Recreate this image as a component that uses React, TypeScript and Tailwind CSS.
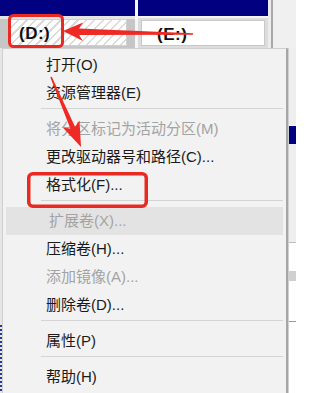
import type { ReactNode } from 'react'

type Entry =
  | { kind: 'item'; label: string; disabled?: boolean; active?: boolean }
  | { kind: 'sep' }

const entries: Entry[] = [
  { kind: 'item', label: '打开(O)' },
  { kind: 'item', label: '资源管理器(E)' },
  { kind: 'sep' },
  { kind: 'item', label: '将分区标记为活动分区(M)', disabled: true },
  { kind: 'item', label: '更改驱动器号和路径(C)...' },
  { kind: 'item', label: '格式化(F)...' },
  { kind: 'sep' },
  { kind: 'item', label: '扩展卷(X)...', disabled: true, active: true },
  { kind: 'item', label: '压缩卷(H)...' },
  { kind: 'item', label: '添加镜像(A)...', disabled: true },
  { kind: 'item', label: '删除卷(D)...' },
  { kind: 'sep' },
  { kind: 'item', label: '属性(P)' },
  { kind: 'sep' },
  { kind: 'item', label: '帮助(H)' },
]

function VolumeLabel({ children }: { children: ReactNode }) {
  return (
    <span className="text-[17px] font-bold leading-none tracking-[0.5px] text-[#111]">
      {children}
    </span>
  )
}

function MenuRow({ entry }: { entry: Entry }) {
  if (entry.kind === 'sep') {
    return (
      <div className="h-[8px] pl-[38px] pr-[3px] pt-[1px]">
        <div className="h-px bg-[#d4d4d4]" />
      </div>
    )
  }
  return (
    <div
      className={`flex h-[28px] items-center pl-[43px] text-[15px] ${
        entry.disabled ? 'text-[#a3a3a3]' : 'text-[#1a1a1a]'
      } ${entry.active ? 'mx-[3px] bg-[#e3e3e3] pl-[40px]' : ''}`}
    >
      {entry.label}
    </div>
  )
}

function Annotations() {
  return (
    <svg
      className="pointer-events-none absolute left-0 top-0"
      width={296}
      height={393}
      viewBox="0 0 296 393"
    >
      <rect x={9.5} y={15.5} width={53} height={31} rx={4} fill="none" stroke="#e82a22" strokeWidth={3} />
      <rect x={28.75} y={173.75} width={117.5} height={32.5} rx={4} fill="none" stroke="#e82a22" strokeWidth={3.5} />
      <polygon
        points="63,31 83,22.5 79,28.5 193,33.2 193,34.8 79,35 83,41"
        fill="#ef2a24"
      />
      <polygon
        points="81,147 79.5,120.5 75,126.7 51.8,76.7 50.3,77.3 70.4,128.7 62.8,127.5"
        fill="#ef2a24"
      />
    </svg>
  )
}

export default function App() {
  return (
    <div className="relative flex h-[393px] w-[296px] flex-col overflow-hidden bg-[#f0f0f0] font-['Liberation_Sans','Noto_Sans_CJK_SC',sans-serif]">
      {/* disk map strip */}
      <div className="flex h-[48px]">
        <div className="flex w-[135px] flex-col bg-[#c6c6c6]">
          <div className="h-[16px] bg-[#000080]" />
          <div className="h-[3px] bg-[#e4e4e4]" />
          <div className="flex flex-1 px-[8px] pb-[2px]">
            <div className="flex flex-1 items-center border border-[#d0d0d0] bg-[repeating-linear-gradient(135deg,#d9d9d9_0px,#d9d9d9_1.5px,#ffffff_1.5px,#ffffff_6px)] pl-[10px] pt-[2px]">
              <VolumeLabel>(D:)</VolumeLabel>
            </div>
          </div>
        </div>
        <div className="w-[3px] bg-[#f6f6f6]" />
        <div className="flex w-[130px] flex-col bg-[#dcdcdc]">
          <div className="h-[16px] bg-[#000080]" />
          <div className="h-[2px] bg-[#f4f4f4]" />
          <div className="flex flex-1 px-[3px] pb-[2px] pt-[2px]">
            <div className="flex flex-1 items-center border border-[#c8c8c8] bg-white pl-[15px] pt-[2px]">
              <VolumeLabel>(E:)</VolumeLabel>
            </div>
          </div>
        </div>
        <div className="w-[3px] bg-[#ececec]" />
        <div className="w-[2px] bg-[#a9a9a9]" />
        <div className="flex-1 bg-[#f0f0f0]" />
      </div>

      {/* context menu row */}
      <div className="flex flex-1">
        <div className="flex w-[2px] flex-col bg-[#e6e6e6]">
          <div className="h-[277px]" />
          <div className="flex-1 bg-[repeating-linear-gradient(180deg,#2a3a9a_0px,#2a3a9a_2px,#e6e6e6_2px,#e6e6e6_4px)]" />
        </div>
        <div className="w-[286px] border-l border-t border-r-2 border-[#cfcfcf] border-r-[#a6a6a6] bg-[#f2f2f2] pt-[2px]">
          {entries.map((entry, i) => (
            <MenuRow key={i} entry={entry} />
          ))}
        </div>
        <div className="flex flex-1 flex-col border-l border-[#d0d0d0] bg-[#eeeeee]">
          <div className="h-[77px]" />
          <div className="h-px bg-[#f8f8f8]" />
          <div className="h-[18px] bg-[#000080]" />
          <div className="h-[98px]" />
          <div className="h-px bg-[#bdbdbd]" />
          <div className="h-[28px] bg-white" />
          <div className="h-[10px] bg-[#cfcfcf]" />
          <div className="h-[40px] bg-white" />
          <div className="h-px bg-[#9a9a9a]" />
          <div className="flex-1 bg-white" />
        </div>
      </div>

      <Annotations />
    </div>
  )
}
